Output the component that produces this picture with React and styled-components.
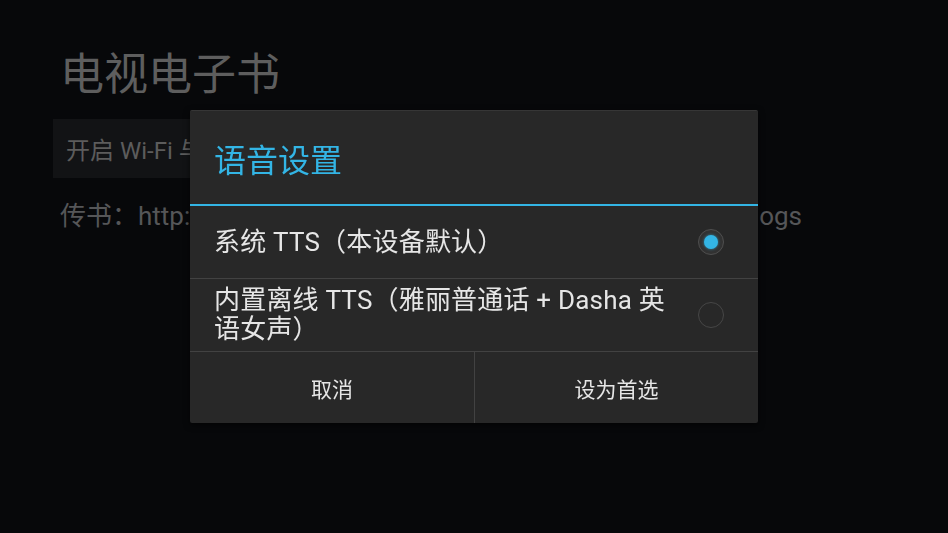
import React, { useState } from "react";
import styled, { createGlobalStyle } from "styled-components";

const GlobalStyle = createGlobalStyle`
  html, body {
    margin: 0;
    padding: 0;
    background: #07080a;
    height: 100%;
  }
  body {
    font-family: Roboto, "Noto Sans CJK SC", sans-serif;
  }
`;

const Screen = styled.div`
  width: 948px;
  height: 533px;
  padding: 45px 0 0 53px;
  box-sizing: border-box;
  display: flex;
  flex-direction: column;
  align-items: flex-start;
`;

const AppTitle = styled.h1`
  margin: 0 0 14px 7px;
  font-size: 44px;
  font-weight: 400;
  line-height: 60px;
  color: #5e5e5e;
`;

const WifiButton = styled.div`
  width: 380px;
  height: 59px;
  box-sizing: border-box;
  padding-left: 13px;
  display: flex;
  align-items: center;
  background: #121315;
  color: #5c5c5c;
  font-size: 24px;
`;

const UploadHint = styled.p`
  width: 742px;
  margin: 20px 0 0 7px;
  display: flex;
  justify-content: space-between;
  font-size: 26px;
  line-height: 36px;
  color: #555658;
  white-space: nowrap;
`;

const Overlay = styled.div`
  position: fixed;
  inset: 0;
  display: flex;
  align-items: center;
  justify-content: center;
`;

const Dialog = styled.div`
  width: 568px;
  background: #282828;
  border-top: 1px solid #363636;
  box-shadow: 0 2px 6px rgba(0, 0, 0, 0.6);
  border-radius: 2px;
  display: flex;
  flex-direction: column;
`;

const DialogTitle = styled.div`
  height: 93px;
  padding-left: 24px;
  display: flex;
  align-items: center;
  font-size: 32px;
  color: #33b5e5;
  border-bottom: 2px solid #33b5e5;
`;

const Option = styled.label`
  min-height: 72px;
  padding: 0 34px 0 24px;
  display: flex;
  align-items: center;
  justify-content: space-between;
  border-bottom: 1px solid #424242;
  cursor: pointer;
`;

const OptionText = styled.span`
  width: 466px;
  font-size: 26px;
  line-height: 29px;
  letter-spacing: 0.2px;
  color: #e6e6e6;
`;

const Radio = styled.span`
  width: 26px;
  height: 26px;
  box-sizing: border-box;
  border-radius: 50%;
  border: 1.5px solid ${(p) => (p.checked ? "#4f4f4f" : "#464646")};
  background: ${(p) => (p.checked ? "#323232" : "transparent")};
  display: grid;
  place-items: center;
  flex-shrink: 0;

  &::after {
    content: "";
    display: ${(p) => (p.checked ? "block" : "none")};
    width: 14px;
    height: 14px;
    border-radius: 50%;
    background: #33b5e5;
    box-shadow: 0 0 3px rgba(51, 181, 229, 0.7);
  }
`;

const ButtonBar = styled.div`
  display: grid;
  grid-template-columns: 1fr 1fr;
  height: 71px;
`;

const DialogButton = styled.button`
  border: none;
  background: transparent;
  color: #e6e6e6;
  font-family: inherit;
  font-size: 21px;
  cursor: pointer;
  & + & {
    border-left: 1px solid #424242;
  }
`;

const options = [
  { id: "system", label: "系统 TTS（本设备默认）" },
  { id: "builtin", label: "内置离线 TTS（雅丽普通话 + Dasha 英语女声）" },
];

export default function App() {
  const [selected, setSelected] = useState("system");

  return (
    <>
      <GlobalStyle />
      <Screen>
        <AppTitle>电视电子书</AppTitle>
        <WifiButton>开启 Wi-Fi 与电脑传书</WifiButton>
        <UploadHint>
          <span>传书：http://192.168.1.105:8080</span>
          <span>帮助：tvbook.blogs</span>
        </UploadHint>
      </Screen>
      <Overlay>
        <Dialog>
          <DialogTitle>语音设置</DialogTitle>
          {options.map((o) => (
            <Option key={o.id} onClick={() => setSelected(o.id)}>
              <OptionText>{o.label}</OptionText>
              <Radio checked={selected === o.id} />
            </Option>
          ))}
          <ButtonBar>
            <DialogButton>取消</DialogButton>
            <DialogButton>设为首选</DialogButton>
          </ButtonBar>
        </Dialog>
      </Overlay>
    </>
  );
}
